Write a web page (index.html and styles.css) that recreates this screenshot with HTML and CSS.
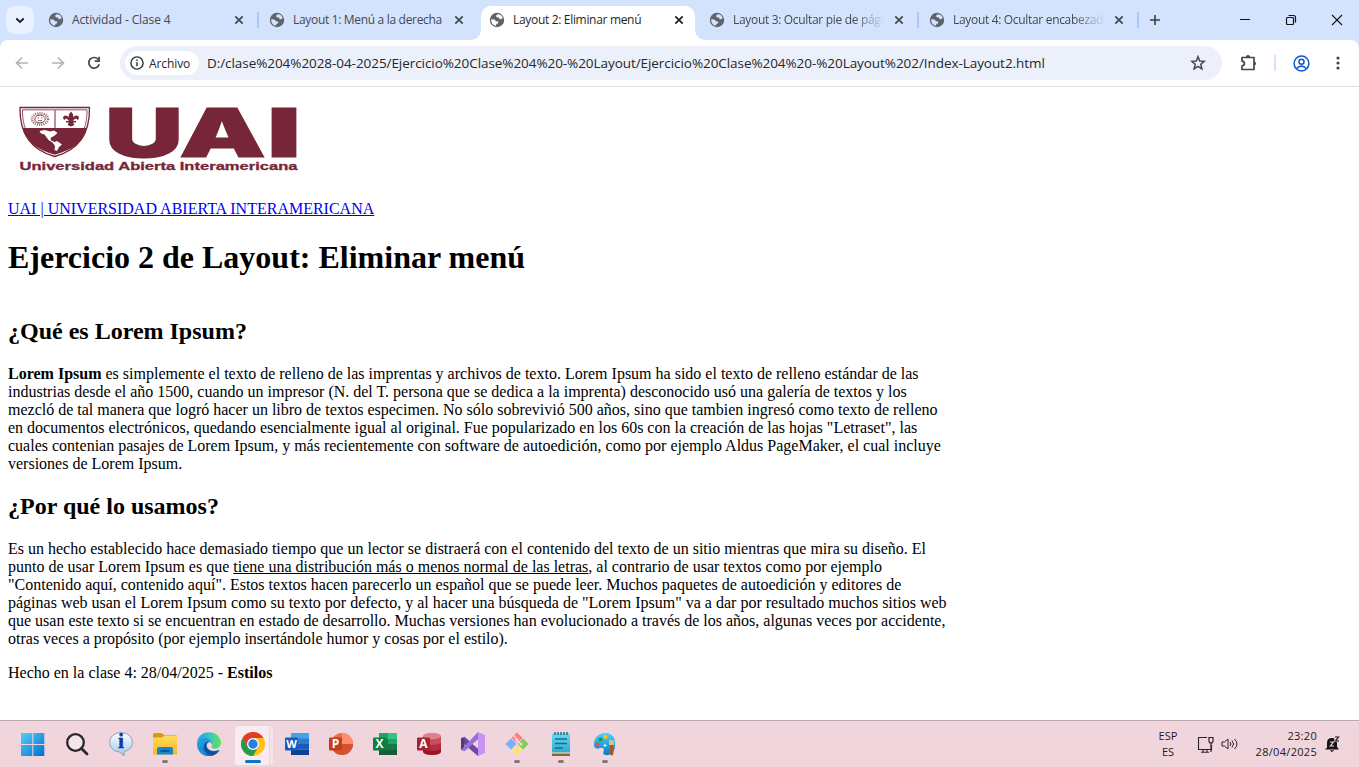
FILE: index.html
```html
<!DOCTYPE html>
<html lang="es">
<head>
<meta charset="utf-8">
<title>Layout 2: Eliminar menú</title>
<link rel="stylesheet" href="styles.css">
</head>
<body>
<svg class="defs" width="0" height="0">
  <symbol id="globe" viewBox="0 0 16 16"><circle cx="8" cy="8" r="7.200" fill="#5f6368"/><path d="M8.600 2.300C11.500 2.300 13.200 4 13.700 6L12 7.200H10.700L10 5.600H8.200L7.200 4.600V3.400zM2.200 7.300 5.500 7.600 7 9.200 9.200 9.500V11.200L7.200 12V13.700C4 13.600 1.900 10.600 2.200 7.300z" class="land"/></symbol>
  <symbol id="close" viewBox="0 0 10 10"><path d="M1.300 1.300 8.700 8.700M8.700 1.300 1.300 8.700" stroke="currentColor" stroke-width="1.700"/></symbol>
</svg>
<header class="tabs">
  <div class="tab-search"><svg width="10" height="7" viewBox="0 0 10 7"><path d="M1.300 1.500 5 5 8.700 1.500" fill="none" stroke="#1f1f1f" stroke-width="1.800"/></svg></div>
  <div class="tab sep first"><svg class="globe"><use href="#globe"/></svg><span class="title">Actividad - Clase 4</span><svg class="close"><use href="#close"/></svg></div>
  <div class="tab"><svg class="globe"><use href="#globe"/></svg><span class="title">Layout 1: Menú a la derecha</span><svg class="close"><use href="#close"/></svg></div>
  <div class="tab active"><svg class="globe"><use href="#globe"/></svg><span class="title">Layout 2: Eliminar menú</span><svg class="close"><use href="#close"/></svg></div>
  <div class="tab sep"><svg class="globe"><use href="#globe"/></svg><span class="title fade">Layout 3: Ocultar pie de página</span><svg class="close"><use href="#close"/></svg></div>
  <div class="tab sep"><svg class="globe"><use href="#globe"/></svg><span class="title fade">Layout 4: Ocultar encabezado</span><svg class="close"><use href="#close"/></svg></div>
  <svg class="plus" width="12" height="12"><path d="M6 1V11M1 6H11" stroke="#3c4043" stroke-width="1.600"/></svg>
  <div class="win">
    <svg width="12" height="12"><path d="M1 5.500H11" stroke="#111"/></svg>
    <svg width="12" height="12"><rect x="1.500" y="3.500" width="7" height="7" rx="1" fill="none" stroke="#111" stroke-width="1.200"/><path d="M3.500 1.500H8.500Q10.500 1.500 10.500 3.500V8.500" fill="none" stroke="#111" stroke-width="1.200"/></svg>
    <svg width="12" height="12"><path d="M1 1 11 11M11 1 1 11" stroke="#111" stroke-width="1.100"/></svg>
  </div>
</header>
<div class="toolbar-wrap">
<nav class="toolbar">
  <svg width="14" height="14"><path d="M13 7H2M7 1.500 1.500 7 7 12.500" fill="none" stroke="#b0b3b6" stroke-width="1.600"/></svg>
  <svg width="14" height="14"><path d="M1 7H12M7 1.500 12.500 7 7 12.500" fill="none" stroke="#b0b3b6" stroke-width="1.600"/></svg>
  <svg width="14" height="14"><path d="M11.500 3.800A5.300 5.300 0 1 0 12.200 8.300" fill="none" stroke="#444746" stroke-width="1.700"/><path d="M12.100.8V5.200H7.700" fill="none" stroke="#444746" stroke-width="1.700"/></svg>
  <div class="address">
    <span class="chip"><svg width="14" height="14"><circle cx="7" cy="7" r="6.100" fill="none" stroke="#303336" stroke-width="1.400"/><path d="M7 6.200V10.300M7 3.600V5" stroke="#303336" stroke-width="1.500"/></svg><span>Archivo</span></span>
    <span class="url">D:/clase%204%2028-04-2025/Ejercicio%20Clase%204%20-%20Layout/Ejercicio%20Clase%204%20-%20Layout%202/Index-Layout2.html</span>
    <svg class="star" width="16" height="16"><path d="M8 1.700 9.700 6 14.300 6.300 10.800 9.300 11.900 13.900 8 11.400 4.100 13.900 5.200 9.300 1.700 6.300 6.300 6z" fill="none" stroke="#444746" stroke-width="1.500"/></svg>
  </div>
  <svg class="puzzle" width="18" height="18"><path d="M3 3.500H14V15.500H2V11.800Q4.400 11.500 4.400 9.500T2 7.200V3.500Z" fill="none" stroke="#444746" stroke-width="1.700" stroke-linejoin="round"/><path d="M6 3A2 2 0 0 1 10 3zM14 7.500A2 2 0 0 1 14 11.500z" fill="#444746"/></svg>
  <i class="divider"></i>
  <svg class="user" width="17" height="17"><circle cx="8.500" cy="8.500" r="7.400" fill="none" stroke="#0b57d0" stroke-width="1.500"/><circle cx="8.500" cy="6.800" r="2.500" fill="none" stroke="#0b57d0" stroke-width="1.500"/><path d="M3.500 13.500Q8.500 8.800 13.500 13.500" fill="none" stroke="#0b57d0" stroke-width="1.500"/></svg>
  <svg class="dots" width="4" height="14" fill="#444746"><circle cx="2" cy="2" r="1.600"/><circle cx="2" cy="7" r="1.600"/><circle cx="2" cy="12" r="1.600"/></svg>
</nav>
</div>
<main class="page">
  <svg class="logo" width="300" height="105" viewBox="8 95 300 105">
    <path d="M20 107.500H89.500C90 134 79 150 54.700 156.500C31 150 19.500 134 20 107.500Z" fill="#fff" stroke="#762638" stroke-width="1.300"/>
    <path d="M22.500 109.800H87C87.500 133 76 148 54.700 154.300C33 148 22 132 22.500 109.800Z" fill="#fff" stroke="#762638" stroke-width=".8"/>
    <path d="M22.500 128H87C84 142 73 150 54.700 154.300C37 150 25.500 141 22.500 128Z" fill="#762638"/>
    <path d="M55 110V128" stroke="#762638"/>
    <ellipse cx="40" cy="119" rx="8" ry="5.700" fill="none" stroke="#762638" stroke-width="2.500" stroke-dasharray="1.100 1" opacity=".7"/><ellipse cx="40" cy="119" rx="5.200" ry="3.900" fill="#fff" stroke="#762638" stroke-width=".9"/><path d="M37.500 118H39M41 118H42.500M38 120.500H42" stroke="#762638" stroke-width=".7"/>
    <path d="M71 111.500Q75 116 72.300 119.500Q73.500 115.500 77 115.500Q80.500 117 77.800 120L76 118.500Q73.500 119 73.200 121H76V122.500H73L74.500 125 71 126.500 67.500 125 69 122.500H66V121H68.800Q68.500 119 66 118.500L64.200 120Q61.500 117 65 115.500Q68.500 115.500 69.700 119.500Q67 116 71 111.500Z" fill="#762638"/>
    <path d="M39.500 131 45 130 50 131.500 54 130.500 57.500 133 54 136 51 137.500 50.500 140 54.500 142 57 141 62 144.500 59 147 57 151 54.500 150 55 146 52.500 142.500 48.500 140 44.500 134.500 41 133.500Z" fill="#fff"/>
    <g class="logo-big"><text x="105" y="157" textLength="78" lengthAdjust="spacingAndGlyphs">U</text><text x="179" y="157" textLength="87" lengthAdjust="spacingAndGlyphs">A</text><text x="267" y="157" textLength="34" lengthAdjust="spacingAndGlyphs">I</text></g>
    <text class="logo-small" x="19.500" y="169.800" textLength="278" lengthAdjust="spacingAndGlyphs">Universidad Abierta Interamericana</text>
  </svg>
  <a href="#">UAI | UNIVERSIDAD ABIERTA INTERAMERICANA</a>
  <h1>Ejercicio 2 de Layout: Eliminar menú</h1>
  <section class="content">
    <h2>¿Qué es Lorem Ipsum?</h2>
    <p><b>Lorem Ipsum</b> es simplemente el texto de relleno de las imprentas y archivos de texto. Lorem Ipsum ha sido el texto de relleno estándar de las industrias desde el año 1500, cuando un impresor (N. del T. persona que se dedica a la imprenta) desconocido usó una galería de textos y los mezcló de tal manera que logró hacer un libro de textos especimen. No sólo sobrevivió 500 años, sino que tambien ingresó como texto de relleno en documentos electrónicos, quedando esencialmente igual al original. Fue popularizado en los 60s con la creación de las hojas "Letraset", las cuales contenian pasajes de Lorem Ipsum, y más recientemente con software de autoedición, como por ejemplo Aldus PageMaker, el cual incluye versiones de Lorem Ipsum.</p>
    <h2>¿Por qué lo usamos?</h2>
    <p>Es un hecho establecido hace demasiado tiempo que un lector se distraerá con el contenido del texto de un sitio mientras que mira su diseño. El punto de usar Lorem Ipsum es que <u>tiene una distribución más o menos normal de las letras</u>, al contrario de usar textos como por ejemplo "Contenido aquí, contenido aquí". Estos textos hacen parecerlo un español que se puede leer. Muchos paquetes de autoedición y editores de páginas web usan el Lorem Ipsum como su texto por defecto, y al hacer una búsqueda de "Lorem Ipsum" va a dar por resultado muchos sitios web que usan este texto si se encuentran en estado de desarrollo. Muchas versiones han evolucionado a través de los años, algunas veces por accidente, otras veces a propósito (por ejemplo insertándole humor y cosas por el estilo).</p>
  </section>
  <footer>Hecho en la clase 4: 28/04/2025 - <b>Estilos</b></footer>
</main>
<div class="taskbar">
  <svg width="24" height="24"><defs>
    <linearGradient id="win" x2="1" y2="1"><stop stop-color="#55cefb"/><stop offset="1" stop-color="#0070cc"/></linearGradient>
    <linearGradient id="edge" x2="1" y2="1"><stop stop-color="#2fa5e0"/><stop offset=".6" stop-color="#1389d2"/><stop offset="1" stop-color="#1259a8"/></linearGradient>
    <linearGradient id="edgeTop"><stop stop-color="#239de0"/><stop offset=".5" stop-color="#34c6c5"/><stop offset="1" stop-color="#67e353"/></linearGradient>
    <linearGradient id="bubble" x2="0" y2="1"><stop stop-color="#fff"/><stop offset="1" stop-color="#9cc8ea"/></linearGradient>
    <linearGradient id="folder" x2="0" y2="1"><stop stop-color="#ffdc62"/><stop offset="1" stop-color="#f5b91d"/></linearGradient>
    <linearGradient id="paint" x2="0" y2="1"><stop stop-color="#50d2f3"/><stop offset="1" stop-color="#0878ce"/></linearGradient>
    <linearGradient id="note" x2="0" y2="1"><stop stop-color="#69d9ef"/><stop offset="1" stop-color="#29a5c9"/></linearGradient></defs>
    <path d="M0 1H11.300V12H0zM12.300 1H23.300V12H12.300zM0 13H11.300V24H0zM12.300 13H23.300V24H12.300z" fill="url(#win)"/></svg>
  <svg width="24" height="24"><circle cx="10.500" cy="10.500" r="8.300" fill="#f3e5e9" stroke="#292727" stroke-width="2.300"/><path d="M16.500 16.500 22 22" stroke="#292727" stroke-width="2.800" stroke-linecap="round"/></svg>
  <svg width="24" height="24"><path d="M12 .7C19 .7 23.300 5 23.300 10.500C23.300 15 20 18.500 15.200 19.500L15 24 10.500 20C4.500 19.500.7 15.500.7 10.500C.7 5 5 .7 12 .7z" fill="url(#bubble)" stroke="#8a9fb4"/><text class="info" x="12" y="16">i</text></svg>
  <span class="app run"><svg width="24" height="24"><path d="M0 3Q0 1 2 1H8.500L11 3H22.500Q24 3 24 5V10H0z" fill="#d99808"/><path d="M0 5.500H9L11.500 3.500H23Q24 3.500 24 5V22.500H0z" fill="url(#folder)"/><path d="M4 22.500V17Q4 15 6 15H18Q20 15 20 17V22.500z" fill="#1685cf"/><path d="M7.500 19H16.500" stroke="#075b9d" stroke-width="2"/></svg></span>
  <svg width="24" height="24"><path d="M.2 10C2-3 22-3 24 10C24 14 22 16.500 18.500 16.500C16 16.500 14 16 14.500 15C17 12 14.500 7.500 10 7.500C5 7 1.500 8.500.2 10z" fill="url(#edgeTop)"/><path d="M0 12C0 8 4 5.500 8.500 6C13 6.500 16 9.500 15 13C14.500 9.500 11.500 9 9.700 12.500C9 17 14 20 20 18.500Q24 17 21.500 19.500C13 29 0 23 0 12z" fill="url(#edge)"/><path d="M9.700 10C4 13 6.500 22 14 23.500Q19 23.500 22.300 18.300C16 21.500 8.500 18 9.500 12.500Q10 10.500 12 10z" fill="#104f9d"/></svg>
  <span class="app current"><svg width="24" height="24"><circle cx="12" cy="12" r="12" fill="#fbc116"/><path d="M1.600 6A12 12 0 0 1 22.400 6H12L7 15z" fill="#e33b2e"/><path d="M1.600 6A12 12 0 0 0 12 24L17.200 15H7z" fill="#229b4b"/><circle cx="12" cy="12" r="6" fill="#fff"/><circle cx="12" cy="12" r="4.700" fill="#287de9"/></svg></span>
  <svg width="24" height="24"><path d="M6 1H24V7H6z" fill="#41a5ee"/><path d="M6 6.500H24V12H6z" fill="#2b7cd3"/><path d="M6 12H24V17.500H6z" fill="#185abd"/><path d="M6 17.500H24V23H6z" fill="#103f91"/><rect y="5.500" width="13" height="13" rx="1" fill="#185abd"/><text class="office w" x="6.500" y="16">W</text></svg>
  <svg width="24" height="24"><circle cx="13" cy="12" r="11" fill="#ed6c47"/><path d="M13 1A11 11 0 0 1 24 12H13z" fill="#ff8f6b"/><path d="M2 12H24A11 11 0 0 1 2 12z" fill="#d35230"/><rect y="5.500" width="13" height="13" rx="1" fill="#c43e1c"/><text class="office" x="6.500" y="16">P</text></svg>
  <svg width="24" height="24"><path d="M6 1H15V23H6z" fill="#21a366"/><path d="M15 1H24V7H15z" fill="#33c481"/><path d="M15 7H24V12H15z" fill="#21a366"/><path d="M6 7H15V18H6z" fill="#107c41"/><path d="M15 12H24V18H15z" fill="#107c41"/><path d="M6 18H24V23H6z" fill="#185c37"/><rect y="5.500" width="13" height="13" rx="1" fill="#107c41"/><text class="office" x="6.500" y="16">X</text></svg>
  <svg width="24" height="24"><path d="M6 4V20Q7 23 15 23T24 20V4z" fill="#c94f60"/><path d="M6 11Q15 15 24 11V17Q15 21 6 17z" fill="#b52b42"/><path d="M6 17Q15 21 24 17V20Q22 23 15 23T6 20z" fill="#941728"/><ellipse cx="15" cy="4" rx="9" ry="3.300" fill="#e1808e"/><rect y="5.500" width="13" height="13" rx="1" fill="#a92233"/><text class="office" x="6.500" y="16">A</text></svg>
  <svg width="24" height="24"><path d="M0 6 3.500 4.700 20 19 17 24 4 13z" fill="#6c49a4"/><path d="M0 6 3.500 7V17L0 18z" fill="#573584"/><path d="M3.500 19.300 0 18 17 0 18 7z" fill="#9a72d5"/><path d="M17 0 24 3V21L17 24z" fill="#c792f0"/><path d="M17 7.500V16.500L11.500 12z" fill="#f0d5dc"/></svg>
  <span class="app run"><svg width="24" height="24"><g transform="rotate(45 12 12)" stroke="#f0d5dc" stroke-width=".8"><rect x="3.500" y="3.500" width="8.500" height="8.500" rx="1" fill="#ff8080"/><rect x="12" y="3.500" width="8.500" height="8.500" rx="1" fill="#80cf55"/><rect x="3.500" y="12" width="8.500" height="8.500" rx="1" fill="#75b2ff"/><rect x="12" y="12" width="8.500" height="8.500" rx="1" fill="#ffe374"/></g><path d="M8 3 12 7V17M12 8 16 12" fill="none" stroke="#f0d5dc" stroke-width="1.200"/><circle cx="12" cy="8" r="1.600" fill="#f0d5dc"/><circle cx="12" cy="17" r="1.600" fill="#f0d5dc"/><circle cx="16" cy="12" r="1.600" fill="#f0d5dc"/></svg></span>
  <span class="app run"><svg width="24" height="24"><rect x="3" y="1.500" width="18" height="21" rx="1" fill="url(#note)"/><path d="M3 21H21V24H3z" fill="#a65b18"/><path d="M3 21H21" stroke="#f5e9db"/><path d="M6 0V3M9 0V3M12 0V3M15 0V3M18 0V3" stroke="#155f83" stroke-width="1.300"/><path d="M6 7H18M6 11.500H18M6 16H14" stroke="#116f95" stroke-width="1.500"/></svg></span>
  <span class="app run"><svg width="24" height="24"><path d="M1 14C0 6 6 0 14 1C20 2 23 7 22 14C22 20 17 24 12 23Q9 22 11 18Q11 15 7 16Q2 18 1 14z" fill="url(#paint)"/><circle cx="4.500" cy="12.500" r="2" fill="#e35335"/><circle cx="7.500" cy="7.500" r="2" fill="#209548"/><circle cx="12.500" cy="5" r="2" fill="#ffc425"/><path d="M12 12V15M10.500 13.500H13.500" stroke="#e9f8ff"/><path d="M17 12H20L20.500 22Q18.500 25 17 22z" fill="#a65a20"/><path d="M16 8H21V13H16z" fill="#ddbd87"/></svg></span>
  <div class="tray">
    <div class="lang">ESP<br>ES</div>
    <svg width="17" height="17"><path d="M10 1.500H1.500V13.500H14.500V9M6 13.500V16M10 13.500V16M4 16.300H12" fill="none" stroke="#292427" stroke-width="1.100"/><path d="M12 1.500H16V5Q16 7 14 7T12 5zM14 7V16" fill="none" stroke="#292427" stroke-width="1.200"/></svg>
    <svg class="sound" width="17" height="16"><path d="M1 6H3.500L7 3V13L3.500 10H1z" fill="none" stroke="#292427"/><path d="M9 6Q11 8 9 10M11 4.500Q14 8 11 11.500M13.500 3Q18.500 8 13.500 13" fill="none" stroke="#292427"/></svg>
    <div class="clock">23:20<br>28/04/2025</div>
    <svg width="15" height="16"><path d="M2 12V7Q2 2 7 2T12 7V11L13.500 12.500V13.500H.5V12.500zM5 14.200H9Q7 17.500 5 14.200z" fill="#151315"/><path d="M9.200 0H15V6H9.200z" fill="#f0d5dc"/><path d="M10 1H13.500L10.500 5H14" fill="none" stroke="#151315" stroke-width="1.200"/><path d="M4.800 6H8.500L5.300 10H9" fill="none" stroke="#f0d5dc" stroke-width="1.200"/></svg>
  </div>
</div>
</body>
</html>
```

FILE: styles.css
```css
* { box-sizing: border-box; }
body { margin: 0; width: 1359px; height: 767px; overflow: hidden; display: flex; flex-direction: column; background: #fff; font-family: "Liberation Serif", serif; color: #000; }
svg { display: block; flex: none; }
.defs { position: absolute; }
.tabs { height: 40px; flex: none; display: flex; background: #d3e3fd; font: 12px "Open Sans", sans-serif; }
.tab-search { width: 28px; height: 28px; margin: 6px 7px 0 6px; border-radius: 9px; background: #ebf2ff; display: grid; place-items: center; flex: none; }
.tab { position: relative; width: 220px; height: 40px; flex: none; display: flex; align-items: center; padding: 0 15px 0 8px; color: #45484d; }
.globe { width: 16px; height: 16px; margin-right: 8px; color: #d3e3fd; }
.land { fill: currentColor; }
.active .globe { color: #fff; }
.title { width: 152px; white-space: nowrap; overflow: hidden; line-height: 20px; letter-spacing: -.32px; margin-right: 9px; }
.first { padding-left: 7px; }
.first .title { letter-spacing: -.12px; margin-right: 10px; }
.close { width: 10px; height: 10px; }
.fade { -webkit-mask-image: linear-gradient(90deg, #000 120px, transparent 152px); mask-image: linear-gradient(90deg, #000 120px, transparent 152px); }
.sep::after { content: ""; position: absolute; right: 2px; top: 12px; width: 2px; height: 16px; background: #a8c7fa; }
.active { color: #1f1f1f; }
.active > * { position: relative; }
.active::before { content: ""; position: absolute; left: 0; top: 6px; width: 214px; height: 34px; background: #fff; border-radius: 10px 10px 0 0; }
.active::after { content: ""; position: absolute; left: -10px; top: 30px; width: 234px; height: 10px; background: radial-gradient(circle at 0 0, transparent 9.5px, #fff 10px) left / 10px 10px no-repeat, radial-gradient(circle at 100% 0, transparent 9.5px, #fff 10px) right / 10px 10px no-repeat; }
.plus { margin: 14px 0 0 8px; }
.win { display: flex; gap: 34px; margin: 14px 16px 0 auto; }
.toolbar-wrap { flex: none; background: #d3e3fd; }
.toolbar { height: 47px; display: flex; align-items: center; padding: 0 0 1px 15px; background: linear-gradient(#fff 46px, #dfe1e5 46px); border-radius: 8px 8px 0 0; }
.toolbar > svg:nth-child(2) { margin: 0 22px; }
.address { width: 1102px; height: 34px; margin-left: 19px; border-radius: 17px; background: #ecf0fa; display: flex; align-items: center; padding-left: 5px; font: 13.500px "Open Sans", sans-serif; color: #25272a; flex: none; }
.chip { width: 74px; height: 24px; border-radius: 12px; background: #fff; display: flex; align-items: center; padding-left: 5px; gap: 5px; font-size: 12px; }
.chip span { font-weight: 500; letter-spacing: -.1px; }
.url { margin-left: 8px; white-space: nowrap; letter-spacing: -.06px; }
.star { margin: 0 16px 0 auto; }
.puzzle { margin-left: 18px; }
.divider { width: 2px; height: 16px; background: #d3e3fd; margin-left: 16px; }
.user { margin-left: 17px; }
.dots { margin-left: 26px; }
.page { height: 633px; flex: none; padding: 8px; }
.logo-big { font: 900 68px Inter, sans-serif; fill: #762638; stroke: #762638; stroke-width: 1px; }
.logo-small { font: bold 11px "Liberation Sans", sans-serif; fill: #762638; stroke: #762638; stroke-width: .3px; }
.page a { color: #0000ee; }
h1 { font-size: 32px; margin: 21.440px 0; }
.content { display: flow-root; width: 940px; }
h2 { font-size: 24px; margin: 19.920px 0; }
p { margin: 16px 0; line-height: 18px; }
.taskbar { height: 47px; flex: none; border-top: 1px solid #b9a7ad; background: #f0d5dc; display: flex; align-items: center; gap: 20px; padding-left: 21px; }
.app { position: relative; width: 24px; height: 24px; flex: none; }
.app svg { position: relative; }
.run::after { content: ""; position: absolute; left: 9px; top: 28px; width: 6px; height: 3px; border-radius: 2px; background: #85777d; }
.current::before { content: ""; position: absolute; left: -7px; top: -7px; width: 38px; height: 39px; border-radius: 4px; background: linear-gradient(90deg, #f9ebef 34px, #ead5dc 34px, #ead5dc 35px, #f6e3e8 35px); border: 1px solid #ead7dc; }
.current::after { content: ""; position: absolute; left: 4px; top: 28px; width: 16px; height: 3px; border-radius: 2px; background: #0876cf; }
.office { font: bold 12px "Open Sans", sans-serif; fill: #fff; text-anchor: middle; }
.w { font-size: 11px; }
.info { font: bold 20px "Liberation Serif", serif; fill: #1238a0; stroke: #1238a0; stroke-width: .6px; text-anchor: middle; }
.tray { margin-left: auto; display: flex; align-items: center; padding-right: 19px; font: 11px/16px "Open Sans", sans-serif; color: #1f1a1c; }
.lang { width: 22px; text-align: center; margin-right: 18px; }
.sound { margin: 0 16px 0 7px; }
.clock { width: 63px; text-align: right; margin-right: 8px; white-space: nowrap; letter-spacing: .3px; }
```
